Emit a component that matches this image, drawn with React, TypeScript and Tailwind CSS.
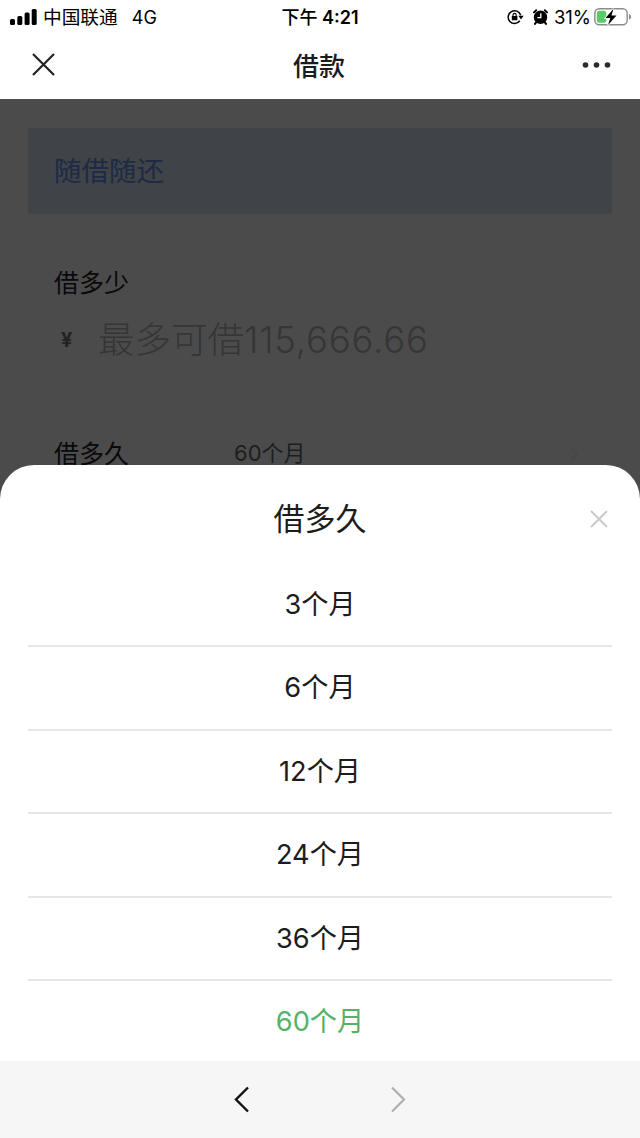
import { useState } from 'react'
import clsx from 'clsx'

const MONTHS = [3, 6, 12, 24, 36, 60]

export default function App() {
  const [selected, setSelected] = useState(60)

  return (
    <main className="flex h-[1138px] w-[640px] flex-col overflow-hidden bg-white font-['Inter','Noto_Sans_CJK_SC',sans-serif] text-[#1c1c1e]">
      <StatusBar />
      <NavBar />

      <div className="relative h-[962px] overflow-hidden">
        <LoanForm months={selected} />
        <div className="absolute inset-0 bg-black/70" />
        <TermSheet selected={selected} onSelect={setSelected} />
      </div>

      <BrowserBar />
    </main>
  )
}

function StatusBar() {
  return (
    <div className="grid h-8 shrink-0 grid-cols-[1fr_auto_1fr] items-center pl-[10px] pr-[8px] pt-px text-[18px] leading-8 text-black">
      <div className="flex items-center">
        <svg className="mb-[2px]" width="27" height="18" viewBox="0 0 27 18">
          <rect x="0" y="11" width="5" height="6" rx="1.5" />
          <rect x="7.3" y="8" width="5" height="9" rx="1.5" />
          <rect x="14.6" y="4.5" width="5" height="12.5" rx="1.5" />
          <rect x="21.7" y="1" width="5" height="16" rx="1.5" />
        </svg>
        <span className="ml-[6px] text-[18.7px]">中国联通</span>
        <span className="ml-[14px]">4G</span>
      </div>
      <div className="mr-[2px] text-[18px] font-semibold">
        <span className="font-medium">下午</span> 4:21
      </div>
      <div className="flex items-center justify-end pb-[2px]">
        <RotationLockIcon />
        <AlarmIcon />
        <span className="ml-[6px] text-[18.5px]">31%</span>
        <BatteryIcon />
      </div>
    </div>
  )
}

function NavBar() {
  return (
    <header className="grid h-[67px] shrink-0 grid-cols-[1fr_auto_1fr] items-center pl-[32px] pr-[29px]">
      <svg className="mb-[2px]" width="23" height="23" viewBox="0 0 23 23" stroke="#222" strokeWidth="2.2">
        <path d="M1 1l21 21M22 1L1 22" />
      </svg>
      <h1 className="mr-[5px] pt-[2px] text-[26px] font-medium leading-none">借款</h1>
      <svg className="mb-px justify-self-end" width="29" height="6" viewBox="0 0 29 6" fill="#2b2b2b">
        <circle cx="3.5" cy="3" r="2.8" />
        <circle cx="14.5" cy="3" r="2.8" />
        <circle cx="25.5" cy="3" r="2.8" />
      </svg>
    </header>
  )
}

function LoanForm({ months }: { months: number }) {
  return (
    <div className="flex h-full flex-col bg-[#fafafa] px-7 pt-[29px]">
      <div className="flex h-[86px] items-center rounded-[3px] bg-[#d6e0f2] px-[26px] pt-[2px] text-[27.5px] text-[#6490e8]">
        随借随还
      </div>

      <section className="mt-[34px] h-[138px] bg-[#fcfcfc] px-[26px] pt-[18px]">
        <h2 className="text-[25px] leading-[34px] text-[#222]">借多少</h2>
        <div className="mt-[14px] flex h-[52px] items-center">
          <span className="w-[44px] pl-[7px] text-[20px] font-bold text-[#777]">¥</span>
          <span className="text-[36.5px] font-light leading-none text-[#b4b4b4]">
            最多可借<span className="tracking-[0.8px]">115,666.66</span>
          </span>
        </div>
      </section>

      <section className="mt-[27px] flex h-[84px] items-center bg-[#fcfcfc] px-[26px]">
        <h2 className="w-[180px] text-[25px] text-[#222]">借多久</h2>
        <span className="mb-[3px] text-[22px] text-[#666]">{months}个月</span>
        <svg className="mb-[3px] ml-auto mr-[8px]" width="8" height="14" viewBox="0 0 8 14" fill="none" stroke="#e8e8e8" strokeWidth="1.5">
          <path d="M1 1l6 6-6 6" />
        </svg>
      </section>
    </div>
  )
}

function TermSheet({ selected, onSelect }: { selected: number; onSelect: (m: number) => void }) {
  return (
    <section className="absolute inset-x-0 bottom-0 h-[596px] rounded-t-[34px] bg-white px-7">
      <div className="grid h-[98.5px] grid-cols-[1fr_auto_1fr] items-center pt-[10px]">
        <h2 className="col-start-2 pb-[2px] text-[31px] leading-none">借多久</h2>
        <svg className="mr-[4px] justify-self-end" width="18" height="18" viewBox="0 0 18 18" stroke="#c8c8c8" strokeWidth="1.8">
          <path d="M1 1l16 16M17 1L1 17" />
        </svg>
      </div>
      <ul>
        {MONTHS.map((m) => (
          <li key={m} className="h-[83.5px] border-b-2 border-[#e6e6e6] last:border-transparent">
            <button
              className={clsx('h-full w-full text-[27.2px] leading-none', selected === m && 'text-[#55b268]')}
              onClick={() => onSelect(m)}
            >
              {m}个月
            </button>
          </li>
        ))}
      </ul>
    </section>
  )
}

function BrowserBar() {
  return (
    <footer className="flex h-[77px] shrink-0 items-center justify-center gap-[140px] bg-[#f6f6f6]">
      <svg width="16" height="27" viewBox="0 0 16 27" fill="none" stroke="#111" strokeWidth="2.4">
        <path d="M14 1.5L2 13.5l12 12" />
      </svg>
      <svg width="16" height="27" viewBox="0 0 16 27" fill="none" stroke="#b0b0b0" strokeWidth="2.2">
        <path d="M2 1.5l12 12-12 12" />
      </svg>
    </footer>
  )
}

function RotationLockIcon() {
  return (
    <svg width="17" height="16" viewBox="0 0 17 16" fill="none" stroke="#000" strokeWidth="1.5">
      <path d="M13.7 6.2A6.4 6.4 0 1 0 12.8 11.8" />
      <path d="M11.4 6.8h5.2L14 10.4z" fill="#000" stroke="none" />
      <rect x="4.8" y="7" width="5.6" height="4.3" rx="0.6" fill="#000" stroke="none" />
      <path d="M6 7.5V6a1.6 1.6 0 0 1 3.2 0v1.5" strokeWidth="1.1" />
    </svg>
  )
}

function AlarmIcon() {
  return (
    <svg className="ml-[9px]" width="15" height="16" viewBox="0 0 15 16">
      <circle cx="7.5" cy="8.2" r="6.7" />
      <path d="M1 3.4L3.2 1.3M14 3.4L11.8 1.3M3.3 13.2l-1.3 1.7M11.7 13.2l1.3 1.7" fill="none" stroke="#000" strokeWidth="2" strokeLinecap="round" />
      <path d="M7.8 4.2v4.4H4.3" fill="none" stroke="#fff" strokeWidth="1.3" />
    </svg>
  )
}

function BatteryIcon() {
  return (
    <svg className="ml-[3px]" width="38" height="18" viewBox="0 0 38 18">
      <rect x="0.8" y="0.8" width="32.4" height="16" rx="4.5" fill="none" stroke="#8b8b8b" strokeWidth="1.4" />
      <path d="M35 6v5.6c1.3-.4 2.1-1.5 2.1-2.8S36.3 6.4 35 6z" fill="#8b8b8b" />
      <rect x="2.8" y="2.8" width="9.5" height="12" rx="2.5" fill="#5bcb69" />
      <path d="M19.5.8L11.5 10h4.8l-2.3 7 8.5-9.5h-5z" fill="#000" stroke="#fff" strokeWidth="1.6" paintOrder="stroke" />
    </svg>
  )
}
